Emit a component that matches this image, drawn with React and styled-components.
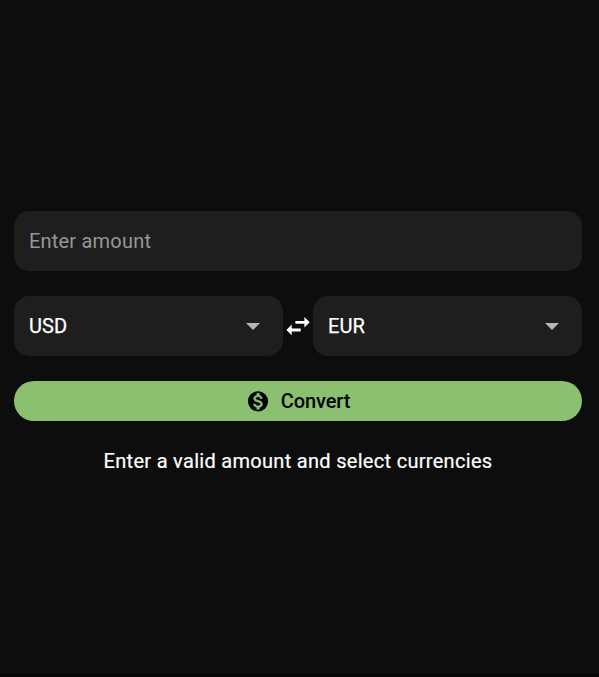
import React from "react";
import styled, { createGlobalStyle } from "styled-components";

const GlobalStyle = createGlobalStyle`
  * { box-sizing: border-box; }
  body { margin: 0; background: #0d0d0d; }
`;

const Page = styled.main`
  height: 677px;
  padding: 211.3px 17px 0 14px;
  background: #0d0d0d;
  border-bottom: 4px solid #090606;
  color: #fff;
  font: 400 20px/24px Roboto, sans-serif;
  overflow: hidden;
`;

const AmountInput = styled.input`
  display: block;
  width: 100%;
  height: 60px;
  padding: 0 15px;
  border: 0;
  border-radius: 15px;
  background: #1e1e1e;
  color: #fff;
  font: inherit;
  letter-spacing: 0.2px;
  outline: none;
  &::placeholder { color: #979797; opacity: 1; }
`;

const CurrencyRow = styled.div`
  display: grid;
  grid-template-columns: 1fr 30px 1fr;
  align-items: center;
  margin: 25px 0;
`;

const CurrencySelect = styled.button`
  display: flex;
  align-items: center;
  justify-content: space-between;
  height: 60px;
  padding: 0 18px 0 15px;
  border: 0;
  border-radius: 15px;
  background: #1e1e1e;
  color: #fff;
  font: inherit;
  letter-spacing: 0.1px;
  -webkit-text-stroke: 0.25px #fff;
`;

const SwapIcon = styled.svg`
  display: block;
  width: 30px;
  height: 30px;
`;

const Icon = styled.svg`
  display: block;
  width: 24px;
  height: 24px;
`;

const ConvertButton = styled.button`
  display: flex;
  align-items: center;
  justify-content: center;
  gap: 11px;
  width: 100%;
  height: 40px;
  padding: 0;
  border: 0;
  border-radius: 20px;
  background: #8bc071;
  color: #000;
  font: 500 20px/24px Roboto, sans-serif;
  letter-spacing: -0.1px;
`;

const Message = styled.p`
  margin: 28px 0 0;
  text-align: center;
  letter-spacing: 0.3px;
  -webkit-text-stroke: 0.2px #fff;
`;

const Currency = ({ code }) => (
  <CurrencySelect>
    {code}
    <Icon viewBox="0 0 24 24"><path d="M5 9h14l-7 7z" fill="#b6b6b6" /></Icon>
  </CurrencySelect>
);

export default function App() {
  return (
    <Page>
      <GlobalStyle />
      <AmountInput placeholder="Enter amount" />
      <CurrencyRow>
        <Currency code="USD" />
        <SwapIcon viewBox="0 0 30 30"><path fill="#fff" d="M3.4 19 8.7 13.6v4h9v2.8h-9v3.8zM26.7 11.3 21.4 6v3.9h-9v2.8h9v3.9z" /></SwapIcon>
        <Currency code="EUR" />
      </CurrencyRow>
      <ConvertButton>
        <Icon viewBox="0 0 24 24">
          <circle cx="12" cy="12.3" r="10.1" fill="#000" />
          <path transform="translate(0 .3)" fill="#8bc071" stroke="#8bc071" strokeWidth=".5" d="M13.41 18.09V20h-2.67v-1.93c-1.71-.36-3.16-1.46-3.27-3.4h1.96c.1 1.05.82 1.87 2.65 1.87 1.96 0 2.4-.98 2.4-1.59 0-.83-.44-1.61-2.67-2.14-2.48-.6-4.18-1.62-4.18-3.67 0-1.72 1.39-2.84 3.11-3.21V4h2.67v1.95c1.86.45 2.79 1.86 2.85 3.39H14.3c-.05-1.11-.64-1.87-2.22-1.87-1.5 0-2.4.68-2.4 1.64 0 .84.65 1.39 2.67 1.91s4.18 1.39 4.18 3.91c-.01 1.83-1.38 2.83-3.12 3.16z" />
        </Icon>
        Convert
      </ConvertButton>
      <Message>Enter a valid amount and select currencies</Message>
    </Page>
  );
}
